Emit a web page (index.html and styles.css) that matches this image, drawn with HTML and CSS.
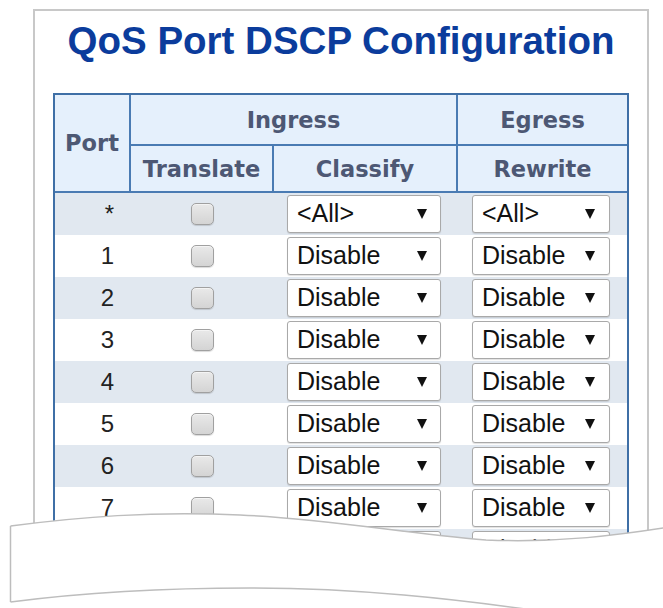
FILE: index.html
```html
<!DOCTYPE html>
<html lang="en">
<head>
<meta charset="utf-8">
<title>QoS Port DSCP Configuration</title>
<link rel="stylesheet" href="styles.css">
</head>
<body>
<div class="frame">
  <h1 class="title">QoS Port DSCP Configuration</h1>
  <div class="qtable">
    <div class="head">
      <div class="hc h-port">Port</div>
      <div class="hc h-ingress">Ingress</div>
      <div class="hc h-egress">Egress</div>
      <div class="hc h-translate">Translate</div>
      <div class="hc h-classify">Classify</div>
      <div class="hc h-rewrite">Rewrite</div>
    </div>
    <div class="row">
      <div class="c-port">*</div>
      <div class="c-tr"><input type="checkbox" class="cb"></div>
      <div class="c-cl"><div class="sel sel-cl"><span>&lt;All&gt;</span><i class="arr"></i></div></div>
      <div class="c-rw"><div class="sel sel-rw"><span>&lt;All&gt;</span><i class="arr"></i></div></div>
    </div>
    <div class="row">
      <div class="c-port">1</div>
      <div class="c-tr"><input type="checkbox" class="cb"></div>
      <div class="c-cl"><div class="sel sel-cl"><span>Disable</span><i class="arr"></i></div></div>
      <div class="c-rw"><div class="sel sel-rw"><span>Disable</span><i class="arr"></i></div></div>
    </div>
    <div class="row">
      <div class="c-port">2</div>
      <div class="c-tr"><input type="checkbox" class="cb"></div>
      <div class="c-cl"><div class="sel sel-cl"><span>Disable</span><i class="arr"></i></div></div>
      <div class="c-rw"><div class="sel sel-rw"><span>Disable</span><i class="arr"></i></div></div>
    </div>
    <div class="row">
      <div class="c-port">3</div>
      <div class="c-tr"><input type="checkbox" class="cb"></div>
      <div class="c-cl"><div class="sel sel-cl"><span>Disable</span><i class="arr"></i></div></div>
      <div class="c-rw"><div class="sel sel-rw"><span>Disable</span><i class="arr"></i></div></div>
    </div>
    <div class="row">
      <div class="c-port">4</div>
      <div class="c-tr"><input type="checkbox" class="cb"></div>
      <div class="c-cl"><div class="sel sel-cl"><span>Disable</span><i class="arr"></i></div></div>
      <div class="c-rw"><div class="sel sel-rw"><span>Disable</span><i class="arr"></i></div></div>
    </div>
    <div class="row">
      <div class="c-port">5</div>
      <div class="c-tr"><input type="checkbox" class="cb"></div>
      <div class="c-cl"><div class="sel sel-cl"><span>Disable</span><i class="arr"></i></div></div>
      <div class="c-rw"><div class="sel sel-rw"><span>Disable</span><i class="arr"></i></div></div>
    </div>
    <div class="row">
      <div class="c-port">6</div>
      <div class="c-tr"><input type="checkbox" class="cb"></div>
      <div class="c-cl"><div class="sel sel-cl"><span>Disable</span><i class="arr"></i></div></div>
      <div class="c-rw"><div class="sel sel-rw"><span>Disable</span><i class="arr"></i></div></div>
    </div>
    <div class="row">
      <div class="c-port">7</div>
      <div class="c-tr"><input type="checkbox" class="cb"></div>
      <div class="c-cl"><div class="sel sel-cl"><span>Disable</span><i class="arr"></i></div></div>
      <div class="c-rw"><div class="sel sel-rw"><span>Disable</span><i class="arr"></i></div></div>
    </div>
    <div class="row">
      <div class="c-port">8</div>
      <div class="c-tr"><input type="checkbox" class="cb"></div>
      <div class="c-cl"><div class="sel sel-cl"><span>Disable</span><i class="arr"></i></div></div>
      <div class="c-rw"><div class="sel sel-rw"><span>Disable</span><i class="arr"></i></div></div>
    </div>
  </div>
</div>
<svg class="tear" width="663" height="103" viewBox="0 0 663 103" aria-hidden="true">
  <path class="tear-fill" d="M10.5,21 C80,12 150,6 240,10 C330,14 400,28 486,35 C560,38 620,30 670,22 L670,110 L0,110 L0,21 Z"/>
  <path class="tear-line" d="M10.5,21 C80,12 150,6 240,10 C330,14 400,28 486,35 C560,38 620,30 670,22"/>
  <path class="tear-line" d="M10.5,21 L10.5,97"/>
  <path class="tear-line" d="M10.5,97 C80,88 150,83 250,83 C350,83 450,92 580,112"/>
</svg>
</body>
</html>
```
FILE: styles.css
```css
html, body {
  margin: 0;
  padding: 0;
  height: 608px;
  overflow: hidden;
  background: #ffffff;
}

body {
  font-family: "Liberation Sans", Arial, sans-serif;
  color: #111111;
}

.frame {
  margin: 9px 0 0 33px;
  width: 616px;
  box-sizing: border-box;
  border: 2px solid #c8c8c8;
  border-bottom: 0;
  padding: 9px 18px 0;
}

.title {
  margin: 0;
  font: 700 38.5px/42px "Liberation Sans", Arial, sans-serif;
  color: #0b3c9c;
  text-align: center;
}

.qtable {
  margin-top: 31px;
  width: 576px;
  box-sizing: border-box;
  border: 2px solid #3f6fa6;
  border-bottom: 0;
  display: flex;
  flex-direction: column;
}

.head {
  display: grid;
  grid-template-columns: 76px 143px 184px 169px;
  grid-template-rows: 51px 47px;
  background: #e5f0fc;
}

.hc {
  box-sizing: border-box;
  display: flex;
  align-items: center;
  justify-content: center;
  font: 700 22.5px "DejaVu Sans", Verdana, sans-serif;
  color: #4d5874;
  border-color: #4a7bb3;
  border-style: solid;
  border-width: 0 0 2px 0;
}

.h-port {
  grid-row: 1 / span 2;
  grid-column: 1;
  border-right-width: 2px;
}

.h-ingress {
  grid-column: 2 / span 2;
  grid-row: 1;
  border-right-width: 2px;
}

.h-egress {
  grid-column: 4;
  grid-row: 1;
}

.h-translate {
  grid-column: 2;
  grid-row: 2;
  border-right-width: 2px;
}

.h-classify {
  grid-column: 3;
  grid-row: 2;
  border-right-width: 2px;
}

.h-rewrite {
  grid-column: 4;
  grid-row: 2;
}

.row {
  display: grid;
  grid-template-columns: 76px 143px 184px 169px;
  height: 42px;
  background: #ffffff;
}

.row:nth-child(even) {
  background: #e1e8f0;
}

.row > div {
  display: flex;
  align-items: center;
}

.c-port {
  justify-content: flex-end;
  padding-right: 17px;
  font-size: 24px;
  color: #222222;
}

.c-tr {
  justify-content: center;
}

.c-cl {
  padding-left: 13px;
}

.c-rw {
  padding-left: 14px;
}

.cb {
  -webkit-appearance: none;
  appearance: none;
  margin: 0;
  width: 23px;
  height: 22px;
  box-sizing: border-box;
  border: 1px solid #a0a0a0;
  border-radius: 5px;
  background: linear-gradient(#e9e9e9, #d4d4d4);
  box-shadow: 0 1px 1px rgba(0, 0, 0, 0.15), inset 0 1px 0 #f4f4f4;
}

.sel {
  display: flex;
  align-items: center;
  justify-content: space-between;
  height: 38px;
  box-sizing: border-box;
  border: 1px solid #a9a9a9;
  border-radius: 3px;
  background: #ffffff;
  box-shadow: 0 1px 1px rgba(0, 0, 0, 0.12);
  padding: 0 13px 0 9px;
  font-size: 25px;
  color: #111111;
}

.sel span {
  margin-top: -2px;
}

.sel-cl {
  width: 154px;
}

.sel-rw {
  width: 138px;
  padding-right: 14px;
}

.arr {
  display: block;
  width: 0;
  height: 0;
  border-left: 5px solid transparent;
  border-right: 5px solid transparent;
  border-top: 10px solid #111111;
}

.tear {
  position: absolute;
  left: 0;
  top: 505px;
}

.tear-fill {
  fill: #ffffff;
}

.tear-line {
  fill: none;
  stroke: #bdbdbd;
  stroke-width: 1.5;
}
```
